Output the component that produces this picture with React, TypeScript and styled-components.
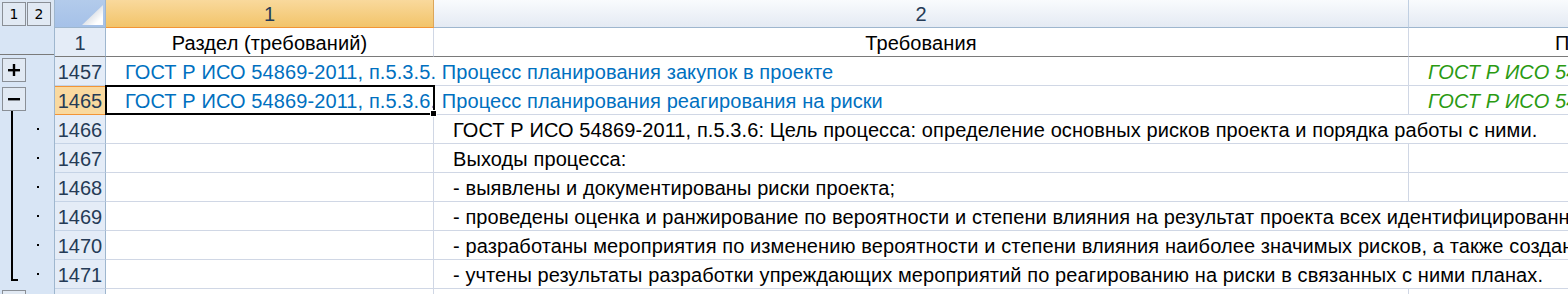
import React from "react";
import styled, { createGlobalStyle, css } from "styled-components";

const GlobalStyle = createGlobalStyle`
  html, body {
    margin: 0;
    padding: 0;
    background: #fff;
    overflow: hidden;
  }
  body {
    font-family: "Liberation Sans", Arial, sans-serif;
  }
`;

const GRID = "#d0d7e5";
const HEAD_BORDER = "#9eb6ce";
const FREEZE = "#7a7a7a";
const ORANGE = "#f29536";

const Sheet = styled.div`
  display: flex;
  width: 1568px;
  height: 294px;
  overflow: hidden;
`;

const Outline = styled.div`
  flex: 0 0 55px;
  box-sizing: border-box;
  background: #d8e5f5;
  border-right: 1px solid ${HEAD_BORDER};
  display: flex;
  flex-direction: column;
`;

const OutlineHead = styled.div`
  height: 28px;
  display: flex;
  align-items: flex-start;
  gap: 1px;
  padding: 2px 0 0 2px;
  box-sizing: border-box;
  background: #dde7f3;
`;

const LevelButton = styled.div`
  width: 24px;
  height: 24px;
  box-sizing: border-box;
  border: 1px solid #8a8f96;
  background: #e1e9f3;
  display: flex;
  align-items: center;
  justify-content: center;
  font-family: "DejaVu Sans", sans-serif;
  font-size: 14px;
  color: #000;
`;

const OutlineBody = styled.div`
  display: grid;
  grid-template-columns: 27px 27px;
  grid-template-rows: 29px repeat(9, 29px);
`;

const OutlineFreeze = styled.div`
  grid-column: 1 / span 2;
  grid-row: 1;
  border-bottom: 1px solid ${FREEZE};
`;

const ToggleButton = styled.div<{ $row: number }>`
  grid-column: 1;
  grid-row: ${(p) => p.$row};
  align-self: center;
  justify-self: start;
  margin-left: 2px;
  width: 24px;
  height: 24px;
  box-sizing: border-box;
  border: 1px solid #8a8f96;
  background: #e1e9f3;
  display: flex;
  align-items: center;
  justify-content: center;
`;

const Bracket = styled.div`
  grid-column: 1;
  grid-row: 4 / span 6;
  margin: -2px 0 6px 11px;
  width: 7px;
  box-sizing: border-box;
  border-left: 2px solid #000;
  border-bottom: 2px solid #000;
`;

const Dot = styled.div<{ $row: number }>`
  grid-column: 2;
  grid-row: ${(p) => p.$row};
  align-self: center;
  margin: 3px 0 0 10px;
  width: 2px;
  height: 2px;
  background: #000;
`;

const Grid = styled.div`
  display: grid;
  grid-template-columns: 51px 328px 975px 396px;
  grid-template-rows: 28px repeat(10, 29px);
  flex: 0 0 auto;
`;

const Corner = styled.div`
  position: relative;
  box-sizing: border-box;
  background: linear-gradient(#b3cbeb, #a5c1e8);
  border-right: 1px solid ${HEAD_BORDER};
  border-bottom: 1px solid ${HEAD_BORDER};

  &::after {
    content: "";
    position: absolute;
    right: 2px;
    bottom: 2px;
    width: 21px;
    height: 20px;
    background: linear-gradient(135deg, #c4ccd6 20%, #ffffff 80%);
    clip-path: polygon(100% 0, 100% 100%, 0 100%);
  }
`;

const ColHead = styled.div<{ $selected?: boolean }>`
  box-sizing: border-box;
  display: flex;
  align-items: center;
  justify-content: center;
  font-size: 20px;
  color: #253b56;
  padding-top: 1px;
  overflow: hidden;
  white-space: nowrap;
  background: linear-gradient(#f9fbfd, #e4eaf3);
  border-right: 1px solid #c0cfe2;
  border-bottom: 1px solid ${HEAD_BORDER};
  ${(p) =>
    p.$selected &&
    css`
      background: linear-gradient(#f9d99c, #f2c46a);
      border-right: 1px solid #dca65a;
      border-bottom: 1px solid ${ORANGE};
    `}
`;

const RowHead = styled.div<{ $selected?: boolean; $frozen?: boolean }>`
  box-sizing: border-box;
  display: flex;
  align-items: center;
  justify-content: center;
  padding-top: 2px;
  font-size: 20px;
  color: #253b56;
  background: #e4ecf7;
  border-right: 1px solid ${HEAD_BORDER};
  border-bottom: 1px solid #c5d3e6;
  ${(p) =>
    p.$selected &&
    css`
      background: #f9d99f;
      border-right: 1px solid #e0a04a;
      border-bottom: 1px solid ${ORANGE};
      box-shadow: inset 0 1px 0 ${ORANGE};
    `}
  ${(p) =>
    p.$frozen &&
    css`
      border-bottom: 1px solid ${FREEZE};
    `}
`;

const Cell = styled.div<{
  $span?: number;
  $color?: string;
  $italic?: boolean;
  $frozen?: boolean;
  $center?: boolean;
  $indent?: boolean;
  $shift?: number;
}>`
  position: relative;
  box-sizing: border-box;
  grid-column: span ${(p) => p.$span || 1};
  display: flex;
  align-items: center;
  justify-content: ${(p) => (p.$center ? "center" : "flex-start")};
  padding: 2px 0 0 ${(p) => (p.$indent ? "19px" : `${p.$shift || 0}px`)};
  font-size: 20px;
  letter-spacing: 0.1px;
  white-space: nowrap;
  overflow: hidden;
  color: ${(p) => p.$color || "#000"};
  font-style: ${(p) => (p.$italic ? "italic" : "normal")};
  border-right: 1px solid ${GRID};
  border-bottom: 1px solid ${(p) => (p.$frozen ? FREEZE : GRID)};
`;

const SelectedCell = styled(Cell)`
  overflow: visible;
  z-index: 1;
`;

const Clip = styled.span`
  overflow: hidden;
`;

const Selection = styled.div`
  position: absolute;
  left: -1px;
  top: -1px;
  width: 330px;
  height: 30px;
  box-sizing: border-box;
  border: 2px solid #000;
  pointer-events: none;

  &::after {
    content: "";
    position: absolute;
    right: -4px;
    bottom: -4px;
    width: 5px;
    height: 5px;
    background: #000;
    border: 1px solid #fff;
  }
`;

const BLUE = "#0070c0";
const GREEN = "#2a9a12";

const details: { n: number; text: string; wide: boolean }[] = [
  {
    n: 1466,
    text: "ГОСТ Р ИСО 54869-2011, п.5.3.6: Цель процесса: определение основных рисков проекта и порядка работы с ними.",
    wide: true,
  },
  { n: 1467, text: "Выходы процесса:", wide: false },
  { n: 1468, text: "- выявлены и документированы риски проекта;", wide: false },
  {
    n: 1469,
    text: "- проведены оценка и ранжирование по вероятности и степени влияния на результат проекта всех идентифицированных рисков;",
    wide: true,
  },
  {
    n: 1470,
    text: "- разработаны мероприятия по изменению вероятности и степени влияния наиболее значимых рисков, а также созданы резервы;",
    wide: true,
  },
  {
    n: 1471,
    text: "- учтены результаты разработки упреждающих мероприятий по реагированию на риски в связанных с ними планах.",
    wide: true,
  },
];

const PlusIcon = () => (
  <svg width="12" height="12" viewBox="0 0 12 12">
    <rect x="0" y="5" width="12" height="2.4" fill="#000" />
    <rect x="4.8" y="0" width="2.4" height="12" fill="#000" />
  </svg>
);

const MinusIcon = () => (
  <svg width="12" height="12" viewBox="0 0 12 12">
    <rect x="0" y="5" width="12" height="2.4" fill="#000" />
  </svg>
);

const App = () => {
  return (
    <>
      <GlobalStyle />
      <Sheet>
        <Outline>
          <OutlineHead>
            <LevelButton>1</LevelButton>
            <LevelButton>2</LevelButton>
          </OutlineHead>
          <OutlineBody>
            <OutlineFreeze />
            <ToggleButton $row={2}>
              <PlusIcon />
            </ToggleButton>
            <ToggleButton $row={3}>
              <MinusIcon />
            </ToggleButton>
            <Bracket />
            {details.map((d, i) => (
              <Dot key={d.n} $row={4 + i} />
            ))}
            <ToggleButton $row={10} />
          </OutlineBody>
        </Outline>

        <Grid>
          <Corner />
          <ColHead $selected>1</ColHead>
          <ColHead>2</ColHead>
          <ColHead>3</ColHead>

          <RowHead $frozen>1</RowHead>
          <Cell $frozen $center>Раздел (требований)</Cell>
          <Cell $frozen $center>Требования</Cell>
          <Cell $frozen $center $shift={14}>Примечание</Cell>

          <RowHead>1457</RowHead>
          <Cell $span={2} $indent $color={BLUE}>
            ГОСТ Р ИСО 54869-2011, п.5.3.5. Процесс планирования закупок в проекте
          </Cell>
          <Cell $indent $italic $color={GREEN}>
            ГОСТ Р ИСО 54869-2011, п.5.3.5
          </Cell>

          <RowHead $selected>1465</RowHead>
          <SelectedCell $span={2} $indent $color={BLUE}>
            <Clip>ГОСТ Р ИСО 54869-2011, п.5.3.6. Процесс планирования реагирования на риски</Clip>
            <Selection />
          </SelectedCell>
          <Cell $indent $italic $color={GREEN}>
            ГОСТ Р ИСО 54869-2011, п.5.3.6
          </Cell>

          {details.map((d) => (
            <React.Fragment key={d.n}>
              <RowHead>{d.n}</RowHead>
              <Cell />
              {d.wide ? (
                <Cell $span={2} $indent>
                  {d.text}
                </Cell>
              ) : (
                <>
                  <Cell $indent>{d.text}</Cell>
                  <Cell />
                </>
              )}
            </React.Fragment>
          ))}

          <RowHead>1472</RowHead>
          <Cell />
          <Cell />
          <Cell />
        </Grid>
      </Sheet>
    </>
  );
};

export default App;
